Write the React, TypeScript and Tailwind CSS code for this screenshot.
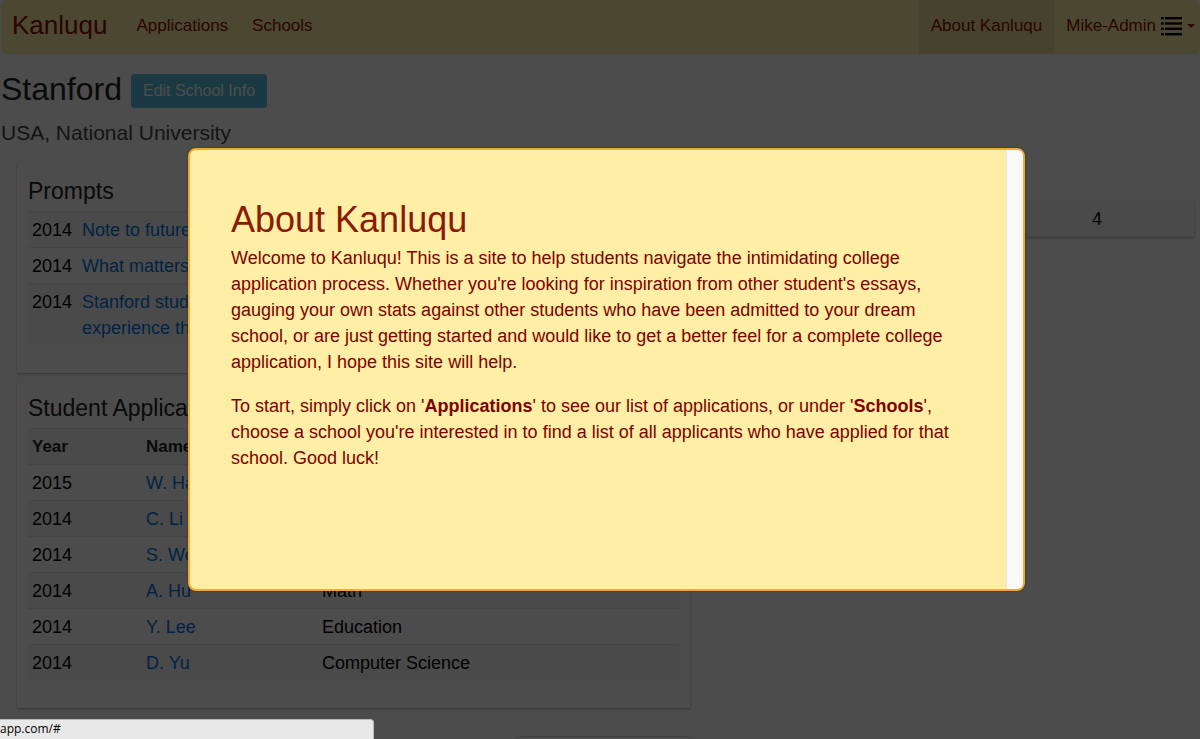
import React from "react";

const prompts = [
  { year: "2014", title: "Note to future roommate" },
  { year: "2014", title: "What matters to you, and why?" },
  {
    year: "2014",
    title:
      "Stanford students possess an intellectual vitality. Reflect on an idea or experience that has been important to you.",
  },
];

const applications = [
  { year: "2015", name: "W. Han", major: "Biology" },
  { year: "2014", name: "C. Li", major: "Economics" },
  { year: "2014", name: "S. Wong", major: "History" },
  { year: "2014", name: "A. Hu", major: "Math" },
  { year: "2014", name: "Y. Lee", major: "Education" },
  { year: "2014", name: "D. Yu", major: "Computer Science" },
];

const card = "bg-white shadow-[0_1px_2px_rgba(0,0,0,0.35)]";
const row = "border-t border-[#e8e8e8] odd:bg-[#f9f9f9]";
const link = "text-[#0275e8]";

function ListIcon() {
  return (
    <svg width="21" height="20" viewBox="0 0 21 20" fill="#000" aria-hidden="true">
      {[1, 6.3, 11.6, 17].map((y) => (
        <g key={y}>
          <rect x="0" y={y} width="2.8" height="2.4" />
          <rect x="4" y={y} width="17" height="2.4" />
        </g>
      ))}
    </svg>
  );
}

function Navbar() {
  return (
    <nav className="flex h-[54px] items-stretch rounded-md bg-[#ffeea5] pl-[11px] text-[17px] text-[#8b1000]">
      <a href="#" className="flex items-center pb-[5px] pr-[29px] text-[26px]">
        Kanluqu
      </a>
      <a href="#" className="flex items-center pb-0.5 pr-6">
        Applications
      </a>
      <a href="#" className="flex items-center pb-0.5">
        Schools
      </a>
      <div className="ml-auto flex">
        <a href="#" className="flex items-center bg-[#eedd99] px-3 pb-0.5">
          About Kanluqu
        </a>
        <button type="button" className="flex items-center gap-[5px] pb-0.5 pl-3 pr-[5px]">
          Mike-Admin
          <ListIcon />
          <svg width="8" height="4" viewBox="0 0 8 4" fill="#8b1000" aria-hidden="true">
            <path d="M0 0h8L4 4z" />
          </svg>
        </button>
      </div>
    </nav>
  );
}

function AboutDialog() {
  return (
    <div
      role="dialog"
      aria-labelledby="about-title"
      className="flex min-h-[443px] w-[837px] overflow-hidden rounded-lg border-2 border-[#f8a72b] bg-[#ffeea5] text-[#8b1a00] shadow-[0_0_2px_#003a4f]"
    >
      <div className="flex-1 pl-[41px] pt-12">
        <h1 id="about-title" className="pb-1 text-[36px] leading-[43px]">
          About Kanluqu
        </h1>
        <div className="max-w-[736px] space-y-[18px] text-[18px] leading-[26px] text-[#800000]">
          <p>
            Welcome to Kanluqu! This is a site to help students navigate the intimidating college
            application process. Whether you're looking for inspiration from other student's
            essays, gauging your own stats against other students who have been admitted to your
            dream school, or are just getting started and would like to get a better feel for a
            complete college application, I hope this site will help.
          </p>
          <p>
            To start, simply click on '<b>Applications</b>' to see our list of applications, or
            under '<b>Schools</b>', choose a school you're interested in to find a list of all
            applicants who have applied for that school. Good luck!
          </p>
        </div>
      </div>
      <div className="w-[17px] border-l border-[#e8e8e8] bg-[#fafafa]" />
    </div>
  );
}

export default function App() {
  return (
    <div className="relative h-screen overflow-hidden bg-white font-['Liberation_Sans',Arial,sans-serif] text-[18px] leading-[26px] text-black">
      <div className="pl-px">
        <Navbar />
        <header className="pt-[18px]">
          <div className="flex items-center gap-[9px]">
            <h2 className="pb-1 text-[32px] leading-[34px] text-[#222]">Stanford</h2>
            <button
              type="button"
              className="h-[34px] rounded bg-[#5bc0de] px-3 text-[16px] text-white"
            >
              Edit School Info
            </button>
          </div>
          <p className="mt-[10px] text-[21px] leading-[26px] text-[#444]">
            USA, National University
          </p>
        </header>
        <main className="flex items-start gap-4 pl-4 pr-[6px] pt-[18px]">
          <div className="w-[673px] shrink-0">
            <section className={`${card} px-[11px] pb-7 pt-[14px]`}>
              <h3 className="pb-[7px] text-[23px] leading-[26px] text-[#222]">Prompts</h3>
              <table className="w-full border-collapse">
                <tbody>
                  {prompts.map((p) => (
                    <tr key={p.title} className={row}>
                      <td className="w-[50px] px-1 pb-1 pt-[5px] align-top">{p.year}</td>
                      <td className="px-1 pb-1 pt-[5px]">
                        <a href="#" className={link}>
                          {p.title}
                        </a>
                      </td>
                    </tr>
                  ))}
                </tbody>
              </table>
            </section>
            <section className={`${card} mt-2 px-[11px] pb-7 pt-[14px]`}>
              <h3 className="pb-[7px] text-[23px] leading-[26px] text-[#222]">
                Student Applications
              </h3>
              <table className="w-full border-collapse">
                <tbody>
                  <tr className={`${row} text-left text-[17px] text-[#222]`}>
                    <th className="w-[114px] px-1 pb-1 pt-[5px]">Year</th>
                    <th className="w-[176px] px-1 pb-1 pt-[5px]">Name</th>
                    <th className="px-1 pb-1 pt-[5px]">Major</th>
                  </tr>
                  {applications.map((a) => (
                    <tr key={a.name} className={row}>
                      <td className="px-1 pb-1 pt-[5px]">{a.year}</td>
                      <td className="px-1 pb-1 pt-[5px]">
                        <a href="#" className={link}>
                          {a.name}
                        </a>
                      </td>
                      <td className="px-1 pb-1 pt-[5px]">{a.major}</td>
                    </tr>
                  ))}
                </tbody>
              </table>
            </section>
            <div className="ml-auto mr-[-12px] mt-7 h-10 w-[194px] rounded-2xl border border-[#ccc]" />
          </div>
          <section className="mt-9 flex h-[37px] flex-1 items-center justify-end bg-[#f8f8f8] shadow-[0_1px_2px_rgba(0,0,0,0.35)]">
            <span className="pr-[92px]">4</span>
          </section>
        </main>
      </div>
      <div className="absolute inset-0 flex items-start justify-center bg-black/70 pl-[13px] pt-[148px]">
        <AboutDialog />
      </div>
      <div className="absolute bottom-0 left-0 h-5 w-[374px] rounded-tr border-r border-t border-[#bbb] bg-[#e8e8e8] font-['Open_Sans',sans-serif] text-[12px] leading-[18px]">
        app.com/#
      </div>
    </div>
  );
}
